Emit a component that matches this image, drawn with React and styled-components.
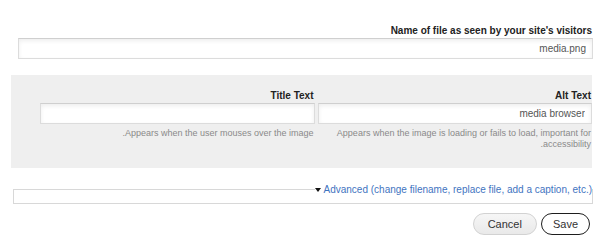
import React from "react";
import styled, { createGlobalStyle } from "styled-components";

const GlobalStyle = createGlobalStyle`
  html, body { margin: 0; padding: 0; background: #fff; }
  body { font-family: "Liberation Sans", Arial, sans-serif; color: #333; }
`;

const Page = styled.div`
  direction: rtl;
  width: 600px;
  padding-top: 25px;
  box-sizing: border-box;
`;

const FormItem = styled.div`
  display: flex;
  flex-direction: column;
  margin: 0 7px 0 18px;
`;

const Label = styled.label`
  display: block;
  font-size: 10px;
  line-height: 12px;
  font-weight: bold;
  color: #222;
  margin-bottom: 1px;
  padding-right: 1px;
`;

const TextInput = styled.input`
  direction: rtl;
  box-sizing: border-box;
  width: 100%;
  height: 21px;
  margin: 0;
  padding: 0 6px;
  border: 1px solid #dcdcdc;
  border-top-color: #cfcfcf;
  border-radius: 0;
  background: #fff;
  box-shadow: inset 0 2px 4px rgba(0, 0, 0, 0.07);
  font-family: "Liberation Sans", Arial, sans-serif;
  font-size: 10px;
  color: #555;
  outline: none;
`;

const Panel = styled.div`
  display: grid;
  grid-template-columns: 1fr 1fr;
  column-gap: 3px;
  margin: 16px 8px 0 11px;
  padding: 15px 0 18px 29px;
  background: #efefef;
`;

const Column = styled.div`
  display: flex;
  flex-direction: column;
`;

const Help = styled.div`
  margin-top: 4px;
  font-size: 9px;
  line-height: 11px;
  color: #8a8a8a;
  padding-right: 1px;
`;

const Fieldset = styled.fieldset`
  margin: 15px 7px 0 13px;
  padding: 0 0 7px;
  border: 1px solid #d8d8d8;
  min-width: 0;
`;

const Legend = styled.legend`
  padding: 0;
  margin: 0;
  font-size: 10px;
  line-height: 12px;
`;

const LegendInner = styled.span`
  direction: ltr;
  unicode-bidi: isolate;
  display: inline-flex;
  align-items: center;
  gap: 3px;
`;

const Arrow = styled.span`
  display: inline-block;
  width: 0;
  height: 0;
  border-left: 3px solid transparent;
  border-right: 3px solid transparent;
  border-top: 4px solid #111;
  margin-top: 1px;
`;

const AdvancedLink = styled.a`
  color: #3f74bf;
  text-decoration: none;
  cursor: pointer;
`;

const Actions = styled.div`
  display: flex;
  gap: 4px;
  margin: 9px 10px 0 0;
`;

const Button = styled.button`
  box-sizing: border-box;
  height: 22px;
  padding: 0 ${(p) => (p.$primary ? 11 : 14)}px;
  border-radius: 11px;
  font-family: "Liberation Sans", Arial, sans-serif;
  font-size: 11px;
  color: #333;
  cursor: pointer;
  border: ${(p) => (p.$primary ? "1.5px solid #1e1e1e" : "1px solid #d2d2d2")};
  background: ${(p) =>
    p.$primary ? "#fff" : "linear-gradient(#f6f6f6, #e9e9e9)"};
`;

export default function App() {
  return (
    <>
      <GlobalStyle />
      <Page>
        <FormItem>
          <Label>Name of file as seen by your site's visitors</Label>
          <TextInput defaultValue="media.png" />
        </FormItem>

        <Panel>
          <Column>
            <Label>Alt Text</Label>
            <TextInput defaultValue="media browser" />
            <Help>
              Appears when the image is loading or fails to load, important for
              accessibility.
            </Help>
          </Column>
          <Column>
            <Label>Title Text</Label>
            <TextInput defaultValue="" />
            <Help>Appears when the user mouses over the image.</Help>
          </Column>
        </Panel>

        <Fieldset>
          <Legend>
            <LegendInner>
              <Arrow />
              <AdvancedLink>
                Advanced (change filename, replace file, add a caption, etc.)
              </AdvancedLink>
            </LegendInner>
          </Legend>
        </Fieldset>

        <Actions>
          <Button $primary>Save</Button>
          <Button>Cancel</Button>
        </Actions>
      </Page>
    </>
  );
}
